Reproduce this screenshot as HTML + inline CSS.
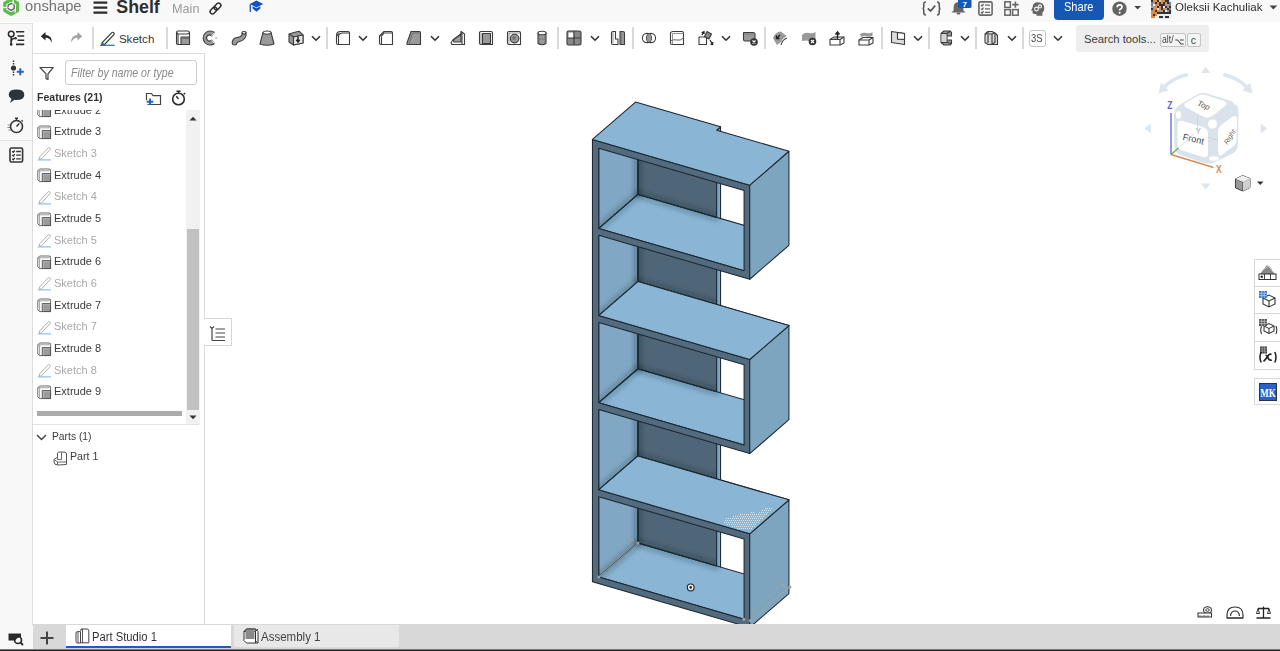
<!DOCTYPE html>
<html><head><meta charset="utf-8"><style>
*{margin:0;padding:0;box-sizing:border-box}
html,body{width:1280px;height:651px;overflow:hidden;background:#fff;font-family:"Liberation Sans",sans-serif;color:#333}
.a{position:absolute}
svg.a{overflow:visible}
#header{position:absolute;left:0;top:0;width:1280px;height:22px;background:#f8f8f8}
#toolbar{position:absolute;left:0;top:22px;width:1280px;height:31px;background:#fff}
#leftstrip{position:absolute;left:0;top:54px;width:33px;height:597px;background:#f8f8f8}
#panel{position:absolute;left:32px;top:53px;width:173px;height:572px;background:#fff;border-left:1px solid #dcdcdc;border-right:1px solid #dcdcdc;border-top:1px solid #dcdcdc}
#viewport{position:absolute;left:0;top:0;width:1280px;height:651px}
#tabbar{position:absolute;left:33px;top:624px;width:1247px;height:25px;background:#d8d8d8}
#bottomline{position:absolute;left:0;top:649px;width:1280px;height:2px;background:#242424;border-top:1px solid #7a7a7a}
.sep{position:absolute;top:27px;width:2px;height:22px;background:#d9d9d9}
.t{position:absolute;white-space:nowrap;line-height:1}
.chev{position:absolute;top:34px;width:12px;height:8px}

</style></head><body>
<div id="viewport"><svg width="1280" height="624" style="position:absolute;left:0;top:0" viewBox="0 0 1280 624"><defs><filter id="blr" x="-20%" y="-20%" width="140%" height="140%"><feGaussianBlur stdDeviation="2.6"/></filter><pattern id="dots" width="2" height="2" patternUnits="userSpaceOnUse"><rect x="0.5" y="0.5" width="1" height="1" fill="#d6e6f2"/></pattern><clipPath id="cc4"><polygon points="598.74,576.98 637.92,543.04 637.92,462.79 598.74,496.73"/><polygon points="637.92,543.04 716.69,565.98 716.69,485.73 637.92,462.79"/><polygon points="598.74,576.98 744.09,619.30 783.26,585.36 637.92,543.04"/></clipPath><clipPath id="cc3"><polygon points="598.74,489.83 637.92,455.89 637.92,375.64 598.74,409.58"/><polygon points="637.92,455.89 716.69,478.83 716.69,398.58 637.92,375.64"/><polygon points="598.74,489.83 749.75,533.80 788.93,499.86 637.92,455.89"/></clipPath><clipPath id="cc2"><polygon points="598.74,402.68 637.92,368.74 637.92,288.49 598.74,322.43"/><polygon points="637.92,368.74 716.69,391.68 716.69,311.43 637.92,288.49"/><polygon points="598.74,402.68 744.09,445.00 783.26,411.06 637.92,368.74"/></clipPath><clipPath id="cc1"><polygon points="598.74,315.53 637.92,281.59 637.92,201.34 598.74,235.28"/><polygon points="637.92,281.59 716.69,304.53 716.69,224.28 637.92,201.34"/><polygon points="598.74,315.53 749.75,359.50 788.93,325.56 637.92,281.59"/></clipPath><clipPath id="cc0"><polygon points="598.74,228.38 637.92,194.44 637.92,114.19 598.74,148.13"/><polygon points="637.92,194.44 716.69,217.38 716.69,137.13 637.92,114.19"/><polygon points="598.74,228.38 744.09,270.70 783.26,236.76 637.92,194.44"/></clipPath></defs><polygon points="637.92,549.59 716.69,572.53 716.69,130.23 637.92,107.29" fill="#4f6678" stroke="#1d2730" stroke-width="1.05" stroke-linejoin="round" /><polygon points="716.69,572.53 720.57,569.17 720.57,126.87 716.69,130.23" fill="#7ea7c4" stroke="#1d2730" stroke-width="1.05" stroke-linejoin="round" /><polygon points="598.74,583.53 637.92,549.59 637.92,107.29 598.74,141.23" fill="#80a7c4" stroke="#1d2730" stroke-width="1.05" stroke-linejoin="round" /><polygon points="598.74,576.98 744.09,619.30 783.26,585.36 637.92,543.04" fill="#8ab5d5" stroke="#1d2730" stroke-width="1.05" stroke-linejoin="round" /><g clip-path="url(#cc4)"><g filter="url(#blr)" stroke="#0f1a24" fill="none" stroke-linecap="round"><path d="M637.92,462.79 L637.92,543.04" stroke-width="7" stroke-opacity="0.28"/><path d="M598.74,576.98 L637.92,543.04" stroke-width="7" stroke-opacity="0.22"/><path d="M637.92,543.04 L716.69,565.98" stroke-width="7" stroke-opacity="0.25"/></g></g><path d="M637.92,462.79 L637.92,543.04 L716.69,565.98 M598.74,576.98 L637.92,543.04" stroke="#1d2730" stroke-width="1.05" fill="none"/><polygon points="598.74,489.83 749.75,533.80 788.93,499.86 637.92,455.89" fill="#8ab5d5" stroke="#1d2730" stroke-width="1.05" stroke-linejoin="round" /><g clip-path="url(#cc3)"><g filter="url(#blr)" stroke="#0f1a24" fill="none" stroke-linecap="round"><path d="M637.92,375.64 L637.92,455.89" stroke-width="7" stroke-opacity="0.28"/><path d="M598.74,489.83 L637.92,455.89" stroke-width="7" stroke-opacity="0.22"/><path d="M637.92,455.89 L716.69,478.83" stroke-width="7" stroke-opacity="0.25"/></g></g><path d="M637.92,375.64 L637.92,455.89 L716.69,478.83 M598.74,489.83 L637.92,455.89" stroke="#1d2730" stroke-width="1.05" fill="none"/><polygon points="598.74,402.68 744.09,445.00 783.26,411.06 637.92,368.74" fill="#8ab5d5" stroke="#1d2730" stroke-width="1.05" stroke-linejoin="round" /><g clip-path="url(#cc2)"><g filter="url(#blr)" stroke="#0f1a24" fill="none" stroke-linecap="round"><path d="M637.92,288.49 L637.92,368.74" stroke-width="7" stroke-opacity="0.28"/><path d="M598.74,402.68 L637.92,368.74" stroke-width="7" stroke-opacity="0.22"/><path d="M637.92,368.74 L716.69,391.68" stroke-width="7" stroke-opacity="0.25"/></g></g><path d="M637.92,288.49 L637.92,368.74 L716.69,391.68 M598.74,402.68 L637.92,368.74" stroke="#1d2730" stroke-width="1.05" fill="none"/><polygon points="598.74,315.53 749.75,359.50 788.93,325.56 637.92,281.59" fill="#8ab5d5" stroke="#1d2730" stroke-width="1.05" stroke-linejoin="round" /><g clip-path="url(#cc1)"><g filter="url(#blr)" stroke="#0f1a24" fill="none" stroke-linecap="round"><path d="M637.92,201.34 L637.92,281.59" stroke-width="7" stroke-opacity="0.28"/><path d="M598.74,315.53 L637.92,281.59" stroke-width="7" stroke-opacity="0.22"/><path d="M637.92,281.59 L716.69,304.53" stroke-width="7" stroke-opacity="0.25"/></g></g><path d="M637.92,201.34 L637.92,281.59 L716.69,304.53 M598.74,315.53 L637.92,281.59" stroke="#1d2730" stroke-width="1.05" fill="none"/><polygon points="598.74,228.38 744.09,270.70 783.26,236.76 637.92,194.44" fill="#8ab5d5" stroke="#1d2730" stroke-width="1.05" stroke-linejoin="round" /><g clip-path="url(#cc0)"><g filter="url(#blr)" stroke="#0f1a24" fill="none" stroke-linecap="round"><path d="M637.92,114.19 L637.92,194.44" stroke-width="7" stroke-opacity="0.28"/><path d="M598.74,228.38 L637.92,194.44" stroke-width="7" stroke-opacity="0.22"/><path d="M637.92,194.44 L716.69,217.38" stroke-width="7" stroke-opacity="0.25"/></g></g><path d="M637.92,114.19 L637.92,194.44 L716.69,217.38 M598.74,228.38 L637.92,194.44" stroke="#1d2730" stroke-width="1.05" fill="none"/><path d="M592.45,581.70 L592.45,139.40 L749.75,185.20 L749.75,279.25 L598.74,235.28 L598.74,315.53 L749.75,359.50 L749.75,453.55 L598.74,409.58 L598.74,489.83 L749.75,533.80 L749.75,627.50 Z M598.74,228.38 L744.09,270.70 L744.09,190.45 L598.74,148.13 Z M598.74,402.68 L744.09,445.00 L744.09,364.75 L598.74,322.43 Z M598.74,576.98 L744.09,619.30 L744.09,539.05 L598.74,496.73 Z " fill="#526b7e" fill-rule="evenodd" stroke="#1d2730" stroke-width="1.05" stroke-linejoin="round"/><polygon points="749.75,279.25 788.93,245.31 788.93,151.26 749.75,185.20" fill="#7ea5bf" stroke="#1d2730" stroke-width="1.05" stroke-linejoin="round" /><polygon points="749.75,453.55 788.93,419.61 788.93,325.56 749.75,359.50" fill="#7ea5bf" stroke="#1d2730" stroke-width="1.05" stroke-linejoin="round" /><polygon points="749.75,627.50 788.93,593.56 788.93,499.86 749.75,533.80" fill="#7ea5bf" stroke="#1d2730" stroke-width="1.05" stroke-linejoin="round" /><polygon points="592.45,139.40 749.75,185.20 788.93,151.26 716.69,130.23 720.57,126.87 635.50,102.10" fill="#8ab5d5" stroke="#1d2730" stroke-width="1.05" stroke-linejoin="round" /><polygon points="598.74,315.53 749.75,359.50 788.93,325.56 637.92,281.59" fill="#8ab5d5" stroke="#1d2730" stroke-width="1.05" stroke-linejoin="round" /><polygon points="598.74,489.83 749.75,533.80 788.93,499.86 637.92,455.89" fill="#8ab5d5" stroke="#1d2730" stroke-width="1.05" stroke-linejoin="round" /><path d="M765 508h1v1h-1zM767 508h1v1h-1zM769 508h1v1h-1zM771 508h1v1h-1zM762 510h1v1h-1zM764 510h1v1h-1zM766 510h1v1h-1zM768 510h1v1h-1zM770 510h1v1h-1zM751 512h1v1h-1zM753 512h1v1h-1zM759 512h1v1h-1zM761 512h1v1h-1zM763 512h1v1h-1zM765 512h1v1h-1zM767 512h1v1h-1zM740 514h1v1h-1zM742 514h1v1h-1zM744 514h1v1h-1zM746 514h1v1h-1zM748 514h1v1h-1zM750 514h1v1h-1zM752 514h1v1h-1zM754 514h1v1h-1zM756 514h1v1h-1zM758 514h1v1h-1zM760 514h1v1h-1zM762 514h1v1h-1zM764 514h1v1h-1zM766 514h1v1h-1zM733 516h1v1h-1zM735 516h1v1h-1zM737 516h1v1h-1zM739 516h1v1h-1zM741 516h1v1h-1zM743 516h1v1h-1zM745 516h1v1h-1zM747 516h1v1h-1zM749 516h1v1h-1zM751 516h1v1h-1zM753 516h1v1h-1zM755 516h1v1h-1zM757 516h1v1h-1zM759 516h1v1h-1zM761 516h1v1h-1zM763 516h1v1h-1zM726 518h1v1h-1zM728 518h1v1h-1zM730 518h1v1h-1zM732 518h1v1h-1zM734 518h1v1h-1zM736 518h1v1h-1zM738 518h1v1h-1zM740 518h1v1h-1zM742 518h1v1h-1zM744 518h1v1h-1zM746 518h1v1h-1zM748 518h1v1h-1zM750 518h1v1h-1zM752 518h1v1h-1zM754 518h1v1h-1zM756 518h1v1h-1zM758 518h1v1h-1zM760 518h1v1h-1zM762 518h1v1h-1zM725 520h1v1h-1zM727 520h1v1h-1zM729 520h1v1h-1zM731 520h1v1h-1zM733 520h1v1h-1zM735 520h1v1h-1zM737 520h1v1h-1zM739 520h1v1h-1zM741 520h1v1h-1zM743 520h1v1h-1zM745 520h1v1h-1zM747 520h1v1h-1zM749 520h1v1h-1zM751 520h1v1h-1zM753 520h1v1h-1zM755 520h1v1h-1zM757 520h1v1h-1zM759 520h1v1h-1zM724 522h1v1h-1zM726 522h1v1h-1zM728 522h1v1h-1zM730 522h1v1h-1zM732 522h1v1h-1zM734 522h1v1h-1zM736 522h1v1h-1zM738 522h1v1h-1zM740 522h1v1h-1zM742 522h1v1h-1zM744 522h1v1h-1zM746 522h1v1h-1zM748 522h1v1h-1zM750 522h1v1h-1zM752 522h1v1h-1zM754 522h1v1h-1zM756 522h1v1h-1zM758 522h1v1h-1zM727 524h1v1h-1zM729 524h1v1h-1zM731 524h1v1h-1zM733 524h1v1h-1zM735 524h1v1h-1zM737 524h1v1h-1zM739 524h1v1h-1zM741 524h1v1h-1zM743 524h1v1h-1zM745 524h1v1h-1zM747 524h1v1h-1zM749 524h1v1h-1zM751 524h1v1h-1zM753 524h1v1h-1zM755 524h1v1h-1zM732 526h1v1h-1zM734 526h1v1h-1zM736 526h1v1h-1zM738 526h1v1h-1zM740 526h1v1h-1zM742 526h1v1h-1zM744 526h1v1h-1zM746 526h1v1h-1zM748 526h1v1h-1zM750 526h1v1h-1zM752 526h1v1h-1zM754 526h1v1h-1zM737 528h1v1h-1zM739 528h1v1h-1zM741 528h1v1h-1zM743 528h1v1h-1zM745 528h1v1h-1zM747 528h1v1h-1zM749 528h1v1h-1zM751 528h1v1h-1z" fill="#dbe9f3"/><path d="M598.74,577.28 L637.92,543.34" stroke="#9b9b9b" stroke-width="1.1"/><path d="M600.74,568.48 L632.92,540.04" stroke="#9b9b9b" stroke-width="1.1" stroke-dasharray="4 5"/><circle cx="598.74" cy="576.98" r="1.6" fill="#9b9b9b"/><circle cx="637.92" cy="543.04" r="1.6" fill="#9b9b9b"/><circle cx="631.92" cy="540.04" r="1.6" fill="#9b9b9b"/><path d="M751.5,611.5 L783,584" stroke="#a2a2a2" stroke-width="1" stroke-dasharray="5 6"/><path d="M750.3,620.6 L789.9,587" stroke="#a2a2a2" stroke-width="1"/><circle cx="743.80" cy="619.30" r="1.6" fill="#a2a2a2"/><circle cx="750.30" cy="620.60" r="1.6" fill="#a2a2a2"/><circle cx="789.90" cy="587.00" r="1.6" fill="#a2a2a2"/><circle cx="783.20" cy="585.00" r="1.6" fill="#a2a2a2"/><circle cx="690.7" cy="587.4" r="3.4" fill="#e8eef3" stroke="#2b2b2b" stroke-width="1.2"/><circle cx="690.7" cy="587.4" r="1.3" fill="#2b2b2b"/></svg><svg class="a" style="left:1140px;top:60px" width="140" height="140" viewBox="1140 60 140 140">
  <g fill="#dde5ed">
    <path d="M1201 73 L1205.6 66.8 L1210.2 73 Z"/>
    <path d="M1201 183.5 L1205.6 189.7 L1210.2 183.5 Z"/>
    <path d="M1150.8 123.5 L1144.3 128.5 L1150.8 133.5 Z"/>
    <path d="M1260.6 123.5 L1267.1 128.5 L1260.6 133.5 Z"/>
  </g>
  <path d="M1187.8 74.5 Q1172 78 1163.5 88" fill="none" stroke="#dde5ed" stroke-width="3.6"/>
  <path d="M1158.5 93.5 L1161 82.5 L1168.6 90.6 Z" fill="#dde5ed"/>
  <path d="M1223.4 74.5 Q1239 78 1247.5 88" fill="none" stroke="#dde5ed" stroke-width="3.6"/>
  <path d="M1252.5 93.5 L1250 82.5 L1242.4 90.6 Z" fill="#dde5ed"/>
  <!-- cube body -->
  <path d="M1199 93.5 Q1203 92.5 1207 93.5 L1231 101 Q1238.5 104 1238.5 111 L1238 145 Q1237.5 151 1232 154 L1214 162.5 Q1208 164.5 1202 162.5 L1181 155 Q1174.5 152.5 1174.5 146 L1174 115 Q1174.5 108 1180 104.5 Z" fill="#dae3ec"/>
  <path d="M1186 107.5 Q1182 104.5 1187 102 L1198 95.8 Q1202 94 1206 95.2 L1223 100.5 Q1229 102.5 1225 106 L1213 115.5 Q1209 118.5 1204 117 Z" fill="#fff"/>
  <path d="M1177.5 125 Q1177.5 119.5 1182.5 121 L1203 127 Q1208 128.5 1208 133.5 L1208 153 Q1208 158.5 1203 157 L1182.5 150.5 Q1177.5 149 1177.5 144 Z" fill="#fff"/>
  <path d="M1218 132 Q1218 127 1222 124.5 L1232 117 Q1237 114 1237 119 L1236.5 139 Q1236.5 144 1232.5 147 L1222.5 154.5 Q1218 157.5 1218 152 Z" fill="#fff"/>
  <ellipse cx="1178.5" cy="115" rx="2.6" ry="4" fill="#fff"/>
  <circle cx="1212.5" cy="124" r="4.6" fill="#fff"/>
  <ellipse cx="1214" cy="158.5" rx="5" ry="2.2" fill="#fff"/>
  <path d="M1229 95.5 L1236 105" stroke="#fff" stroke-width="1.5"/>
  <path d="M1197.5 115 V129 M1208.5 137 L1218 140.5" stroke="#c4cfd9" stroke-width="0.7" fill="none"/>
  <text x="1197" y="108.5" font-size="7.8" font-style="italic" fill="#555" font-family="Liberation Sans" transform="rotate(22 1205 106)">Top</text>
  <text x="1183" y="142" font-size="9.2" fill="#484848" font-family="Liberation Sans" transform="rotate(13 1193 138)">Front</text>
  <text x="1219" y="142" font-size="6.9" font-style="italic" fill="#707070" font-family="Liberation Sans" transform="rotate(-58 1226 136)">Right</text>
  <text x="1195.5" y="134" font-size="8.2" fill="#aaa" font-family="Liberation Sans">Y</text>
  <!-- axes -->
  <path d="M1171 154.5 L1171 113" stroke="#5b64d6" stroke-width="1.3"/>
  <path d="M1171 154.5 L1213.5 167.5" stroke="#d98a52" stroke-width="1.4"/>
  <path d="M1171 154.5 L1178.5 148" stroke="#5fb04a" stroke-width="1.2"/>
  <path d="M1178.5 148 L1194.5 133.5" stroke="#c9cfd6" stroke-width="0.6"/>
  <text x="1167.3" y="109.5" font-size="10" font-weight="bold" fill="#5b64d6" font-family="Liberation Sans" transform="translate(1167.3 109.5) scale(0.85 1) translate(-1167.3 -109.5)">Z</text>
  <text x="1216" y="173.5" font-size="10" font-weight="bold" fill="#d98a52" font-family="Liberation Sans" transform="translate(1216 173.5) scale(0.85 1) translate(-1216 -173.5)">X</text>
  <!-- view mode cube -->
  <path d="M1235.5 179 L1242.5 175.5 L1250 178.5 L1250 187.5 L1243 191 L1235.5 188 Z" fill="#999" stroke="#333" stroke-width="0.9"/>
  <path d="M1235.5 179 L1243 182 L1250 178.5 M1243 182 V191" fill="none" stroke="#333" stroke-width="0.9"/>
  <path d="M1243 182 L1250 178.5 V187.5 L1243 191Z" fill="#cfcfcf"/>
  <path d="M1235.5 179 L1242.5 175.5 L1250 178.5 L1243 182Z" fill="#eee"/>
  <path d="M1257 181.5 H1263.5 L1260.25 185 Z" fill="#333"/>
</svg>
<!-- right side tool tabs -->
<div class="a" style="left:1254px;top:258.5px;width:26px;height:111px;background:#fff;border:1px solid #d8d8d8;border-right:none"></div>
<div class="a" style="left:1254px;top:285.5px;width:26px;height:1px;background:#d8d8d8"></div>
<div class="a" style="left:1254px;top:313px;width:26px;height:1px;background:#d8d8d8"></div>
<div class="a" style="left:1254px;top:341px;width:26px;height:1px;background:#d8d8d8"></div>
<div class="a" style="left:1254px;top:377.5px;width:26px;height:27.5px;background:#fff;border:1px solid #d8d8d8;border-right:none"></div>
<svg class="a" style="left:1258px;top:263px" width="20" height="18" viewBox="0 0 20 18"><path d="M2 11 L9 2 L17 11 Z" fill="#888"/><path d="M6 6 L11 3 L14 7" fill="none" stroke="#bbb" stroke-width="1"/><rect x="1" y="11" width="17" height="5.5" fill="#fff" stroke="#333" stroke-width="1"/><path d="M6.5 11 V16.5 M12.5 11 V16.5" stroke="#333" stroke-width="0.9"/><circle cx="3.8" cy="13.8" r="1.3" fill="#333"/></svg>
<svg class="a" style="left:1258px;top:290px" width="20" height="18" viewBox="0 0 20 18"><path d="M5 8 L11 5 L17 8 V14 L11 17 L5 14 Z" fill="#fff" stroke="#333" stroke-width="1.1"/><path d="M5 8 L11 11 L17 8 M11 11 V17" fill="none" stroke="#333" stroke-width="1.1"/><rect x="1" y="1" width="8" height="7" fill="#3b7bd4"/><path d="M1 3.3 H9 M1 5.6 H9 M3.7 1 V8 M6.3 1 V8" stroke="#bcd3f2" stroke-width="0.7"/></svg>
<svg class="a" style="left:1258px;top:318px" width="20" height="18" viewBox="0 0 20 18"><path d="M6 8 L11 5.5 L16 8 V13 L11 15.5 L6 13 Z" fill="#fff" stroke="#333" stroke-width="1.1"/><path d="M6 8 L11 10.5 L16 8 M11 10.5 V15.5" fill="none" stroke="#333" stroke-width="1"/><rect x="1" y="1" width="8" height="7" fill="#555"/><path d="M1 3.3 H9 M1 5.6 H9 M3.7 1 V8 M6.3 1 V8" stroke="#ccc" stroke-width="0.7"/><path d="M3.5 8 Q2 12 3.5 16 M18 8 Q19.5 12 18 16" fill="none" stroke="#333" stroke-width="1.1"/></svg>
<svg class="a" style="left:1258px;top:346px" width="20" height="18" viewBox="0 0 20 18"><rect x="2" y="0.5" width="7" height="7" fill="#444"/><path d="M2 2.8 H9 M2 5.1 H9 M4.3 0.5 V7.5 M6.6 0.5 V7.5" stroke="#bbb" stroke-width="0.6"/><path d="M3.2 6 Q0.8 11 3.2 16.5 M16.8 6 Q19.2 11 16.8 16.5" fill="none" stroke="#222" stroke-width="1.6"/><path d="M5.5 15.5 Q8 13 10 10 Q11.5 7.5 13.5 8.5 M7.5 9.5 Q9 9 10 11.5 Q11 15 13.8 14" fill="none" stroke="#222" stroke-width="1.7"/></svg>
<svg class="a" style="left:1259px;top:383px" width="18" height="18" viewBox="0 0 18 18"><rect x="0.5" y="0.5" width="17" height="17" fill="#2a62c9" stroke="#2b3440" stroke-width="1"/><text x="9" y="14.2" font-size="12.5" font-weight="bold" font-family="Liberation Serif" fill="#fff" text-anchor="middle" transform="translate(9 14) scale(0.72 1) translate(-9 -14)">MK</text></svg>
<!-- bottom-right measure icons -->
<svg class="a" style="left:1197px;top:606px" width="16" height="13" viewBox="0 0 16 13"><ellipse cx="10.5" cy="4" rx="4" ry="3.2" fill="#fff" stroke="#333" stroke-width="1.1"/><ellipse cx="10.5" cy="4" rx="1.8" ry="1.3" fill="none" stroke="#333" stroke-width="0.9"/><path d="M1 7 H14.5 V11 H1 Z" fill="#fff" stroke="#333" stroke-width="1.1"/><path d="M3 9 V11 M5 9.5 V11 M7 9 V11 M9 9.5 V11 M11 9 V11" stroke="#333" stroke-width="0.7"/></svg>
<svg class="a" style="left:1226px;top:606px" width="18" height="13" viewBox="0 0 18 13"><path d="M1 12 V9 Q1 1 9 1 Q17 1 17 9 V12 Z" fill="none" stroke="#333" stroke-width="1.2"/><path d="M4.5 10 Q5 5 9 5 Q13 5 13.5 10" fill="none" stroke="#333" stroke-width="1.2"/><path d="M1 12 H17" stroke="#333" stroke-width="1.2"/></svg>
<svg class="a" style="left:1256px;top:606px" width="15" height="13" viewBox="0 0 15 13"><path d="M7.5 0.5 V11.5 M2 2.5 H13 M0.5 12 H14.5" stroke="#222" stroke-width="1.3"/><path d="M2 2.5 L0.5 7.5 H3.5 Z M13 2.5 L11.5 7.5 H14.5 Z" fill="none" stroke="#222" stroke-width="0.9"/></svg>
</div>
<div id="header">
  <svg class="a" style="left:0px;top:-2px" width="24" height="20" viewBox="0 0 24 20">
    <path d="M11.2 1.6 L17.6 5.2 L17.6 12.6 L11.2 16.2 L4.8 12.6 L4.8 5.2 Z" fill="none" stroke="#5dbb4e" stroke-width="3.3" stroke-linejoin="round"/>
    <path d="M13.3 1 L13.3 5.6" stroke="#f8f8f8" stroke-width="1.3"/>
    <path d="M2.6 9.6 L7.4 9.4" stroke="#f8f8f8" stroke-width="1.3"/>
    <path d="M15.2 14.5 L15.2 10.8" stroke="#f8f8f8" stroke-width="1.3"/>
    <path d="M11.2 5.4 L14.2 7.1 L14.2 10.6 L11.2 12.3 L8.2 10.6 L8.2 7.1 Z" fill="none" stroke="#666" stroke-width="1.5"/>
    <path d="M12.7 5.6 L13.3 7.6 M8 9.6 L9.7 8.9" stroke="#f8f8f8" stroke-width="0.8"/>
  </svg>
  <div class="t" style="left:25.3px;top:-1px;font-size:14.5px;color:#747474;transform:scaleX(1.016);transform-origin:0 0">onshape</div>
  <svg class="a" style="left:93px;top:1px" width="15" height="13" viewBox="0 0 15 13"><path d="M0.5 1.6H14.3M0.5 6.6H14.3M0.5 11.6H14.3" stroke="#2b2b2b" stroke-width="2.2"/></svg>
  <div class="t" style="left:116.3px;top:-1px;font-size:17.8px;font-weight:bold;color:#2e2e2e">Shelf</div>
  <div class="t" style="left:171.5px;top:2.57px;font-size:12.2px;color:#9a9a9a;transform:scaleX(1.04);transform-origin:0 0">Main</div>
  <svg class="a" style="left:208px;top:1px" width="15" height="15" viewBox="0 0 15 15"><g transform="rotate(-45 7.5 7.5)"><rect x="0.9" y="5.2" width="7.6" height="4.6" rx="2.3" fill="none" stroke="#2d2d2d" stroke-width="1.5"/><rect x="6.5" y="5.2" width="7.6" height="4.6" rx="2.3" fill="none" stroke="#2d2d2d" stroke-width="1.5"/></g></svg>
  <svg class="a" style="left:249px;top:0px" width="15" height="13" viewBox="0 0 15 13"><path d="M7.5 0.4 L14.2 4 L7.5 7.4 L0.8 4 Z" fill="#1550c0"/><path d="M3.6 6.2 V8.6 L7.5 11.8 L11.4 8.6 V6.2 L7.5 8.3 Z" fill="#1550c0"/><path d="M1.3 4.2 V12" stroke="#1550c0" stroke-width="1.3"/></svg>
  <!-- right side -->
  <svg class="a" style="left:922px;top:1px" width="19" height="15" viewBox="0 0 19 15"><path d="M4 1 Q1.8 1 1.8 3 V5.8 Q1.8 7.3 0.6 7.5 Q1.8 7.8 1.8 9.2 V12 Q1.8 14 4 14 M15 1 Q17.2 1 17.2 3 V5.8 Q17.2 7.3 18.4 7.5 Q17.2 7.8 17.2 9.2 V12 Q17.2 14 15 14" fill="none" stroke="#555" stroke-width="1.5"/><path d="M5.8 7.3 L8.6 10 L13.2 4.6" fill="none" stroke="#555" stroke-width="1.7"/></svg>
  <svg class="a" style="left:950px;top:0px" width="22" height="15" viewBox="0 0 22 15"><path d="M8.5 2 Q3.6 2.4 3.6 7.6 V10.6 L1.4 12.6 H15.6 L13.4 10.6 V7.6 Q13.4 2.4 8.5 2 Z" fill="#666"/><rect x="6.6" y="12.4" width="3.8" height="2.2" rx="1" fill="#666"/><rect x="8" y="-1" width="13.5" height="9" rx="1.5" fill="#1658b8"/><text x="14.7" y="6.6" font-size="8" font-family="Liberation Sans" font-weight="bold" fill="#fff" text-anchor="middle">7</text></svg>
  <svg class="a" style="left:978px;top:1px" width="15" height="15" viewBox="0 0 15 15"><rect x="0.9" y="0.9" width="13.2" height="13.2" rx="1.5" fill="none" stroke="#666" stroke-width="1.6"/><path d="M3 4 L4 5 L5.6 3 M3 7.6 L4 8.6 L5.6 6.6 M3 11.2 L4 12.2 L5.6 10.2 M7 4.2H12 M7 7.8H12 M7 11.4H12" fill="none" stroke="#666" stroke-width="1.3"/></svg>
  <svg class="a" style="left:1004px;top:1px" width="16" height="15" viewBox="0 0 16 15"><rect x="0.8" y="0.8" width="5.6" height="5.6" fill="none" stroke="#666" stroke-width="1.5"/><rect x="0.8" y="8.6" width="5.6" height="5.6" fill="none" stroke="#666" stroke-width="1.5"/><rect x="8.6" y="8.6" width="5.6" height="5.6" fill="none" stroke="#666" stroke-width="1.5"/><path d="M11.4 0.4 V6.8 M8.2 3.6 H14.6" stroke="#666" stroke-width="1.6"/></svg>
  <svg class="a" style="left:1030px;top:2px" width="15" height="14" viewBox="0 0 15 14"><path d="M7.8 0.3 Q14.3 0.3 14.3 6.4 Q14.3 9 12.4 10.4 V13.8 H6.4 V12 H4 Q2.6 12 2.6 10.6 V8.8 L1 8.4 L2.6 5.4 Q2.8 0.3 7.8 0.3 Z" fill="#666"/><circle cx="6.5" cy="7" r="1.9" fill="none" stroke="#f8f8f8" stroke-width="1.1"/><circle cx="10" cy="4.4" r="1.5" fill="none" stroke="#f8f8f8" stroke-width="1.1"/></svg>
  <div class="a" style="left:1054px;top:-3px;width:50px;height:22.5px;background:#1557b2;border-radius:4px"></div>
  <div class="t" style="left:1063.9px;top:1px;font-size:12.2px;color:#fff;transform:scaleX(0.906);transform-origin:0 0">Share</div>
  <svg class="a" style="left:1111px;top:2px" width="32" height="14" viewBox="0 0 32 14"><circle cx="8.5" cy="6.7" r="7.2" fill="#646464"/><path d="M6.2 5.2 Q6.2 2.8 8.6 2.8 Q11 2.8 11 5 Q11 6.4 9.2 7.2 Q8.6 7.6 8.6 8.6" fill="none" stroke="#fff" stroke-width="1.7"/><circle cx="8.6" cy="10.8" r="1.05" fill="#fff"/><path d="M23.3 4 H30 L26.65 7.6 Z" fill="#444"/></svg>
  <svg class="a" style="left:1151px;top:0px" width="20" height="19" viewBox="0 0 20 19"><g style="filter:blur(0.35px)"><rect x="0" y="0" width="2.05" height="2.1" fill="#2b3542"/><rect x="2" y="0" width="2.05" height="2.1" fill="#df8a48"/><rect x="4" y="0" width="2.05" height="2.1" fill="#df8a48"/><rect x="6" y="0" width="2.05" height="2.1" fill="#2b3542"/><rect x="8" y="0" width="2.05" height="2.1" fill="#f1c59a"/><rect x="10" y="0" width="2.05" height="2.1" fill="#df8a48"/><rect x="12" y="0" width="2.05" height="2.1" fill="#df8a48"/><rect x="14" y="0" width="2.05" height="2.1" fill="#2b3542"/><rect x="16" y="0" width="2.05" height="2.1" fill="#2b3542"/><rect x="18" y="0" width="2.05" height="2.1" fill="#ececec"/><rect x="0" y="2" width="2.05" height="2.1" fill="#5d8ab0"/><rect x="2" y="2" width="2.05" height="2.1" fill="#df8a48"/><rect x="4" y="2" width="2.05" height="2.1" fill="#2b3542"/><rect x="6" y="2" width="2.05" height="2.1" fill="#df8a48"/><rect x="8" y="2" width="2.05" height="2.1" fill="#2b3542"/><rect x="10" y="2" width="2.05" height="2.1" fill="#df8a48"/><rect x="12" y="2" width="2.05" height="2.1" fill="#2b3542"/><rect x="14" y="2" width="2.05" height="2.1" fill="#df8a48"/><rect x="16" y="2" width="2.05" height="2.1" fill="#2b3542"/><rect x="18" y="2" width="2.05" height="2.1" fill="#5d8ab0"/><rect x="0" y="4" width="2.05" height="2.1" fill="#5d8ab0"/><rect x="2" y="4" width="2.05" height="2.1" fill="#ececec"/><rect x="4" y="4" width="2.05" height="2.1" fill="#df8a48"/><rect x="6" y="4" width="2.05" height="2.1" fill="#df8a48"/><rect x="8" y="4" width="2.05" height="2.1" fill="#2b3542"/><rect x="10" y="4" width="2.05" height="2.1" fill="#2b3542"/><rect x="12" y="4" width="2.05" height="2.1" fill="#2b3542"/><rect x="14" y="4" width="2.05" height="2.1" fill="#9ba5ae"/><rect x="16" y="4" width="2.05" height="2.1" fill="#df8a48"/><rect x="18" y="4" width="2.05" height="2.1" fill="#5d8ab0"/><rect x="0" y="6" width="2.05" height="2.1" fill="#9ba5ae"/><rect x="2" y="6" width="2.05" height="2.1" fill="#df8a48"/><rect x="4" y="6" width="2.05" height="2.1" fill="#df8a48"/><rect x="6" y="6" width="2.05" height="2.1" fill="#2b3542"/><rect x="8" y="6" width="2.05" height="2.1" fill="#df8a48"/><rect x="10" y="6" width="2.05" height="2.1" fill="#2b3542"/><rect x="12" y="6" width="2.05" height="2.1" fill="#ececec"/><rect x="14" y="6" width="2.05" height="2.1" fill="#2b3542"/><rect x="16" y="6" width="2.05" height="2.1" fill="#df8a48"/><rect x="18" y="6" width="2.05" height="2.1" fill="#2b3542"/><rect x="0" y="8" width="2.05" height="2.1" fill="#2b3542"/><rect x="2" y="8" width="2.05" height="2.1" fill="#df8a48"/><rect x="4" y="8" width="2.05" height="2.1" fill="#df8a48"/><rect x="6" y="8" width="2.05" height="2.1" fill="#ececec"/><rect x="8" y="8" width="2.05" height="2.1" fill="#df8a48"/><rect x="10" y="8" width="2.05" height="2.1" fill="#2b3542"/><rect x="12" y="8" width="2.05" height="2.1" fill="#df8a48"/><rect x="14" y="8" width="2.05" height="2.1" fill="#9ba5ae"/><rect x="16" y="8" width="2.05" height="2.1" fill="#2b3542"/><rect x="18" y="8" width="2.05" height="2.1" fill="#5d8ab0"/><rect x="0" y="10" width="2.05" height="2.1" fill="#df8a48"/><rect x="2" y="10" width="2.05" height="2.1" fill="#df8a48"/><rect x="4" y="10" width="2.05" height="2.1" fill="#2b3542"/><rect x="6" y="10" width="2.05" height="2.1" fill="#df8a48"/><rect x="8" y="10" width="2.05" height="2.1" fill="#9ba5ae"/><rect x="10" y="10" width="2.05" height="2.1" fill="#df8a48"/><rect x="12" y="10" width="2.05" height="2.1" fill="#2b3542"/><rect x="14" y="10" width="2.05" height="2.1" fill="#ececec"/><rect x="16" y="10" width="2.05" height="2.1" fill="#df8a48"/><rect x="18" y="10" width="2.05" height="2.1" fill="#2b3542"/><rect x="0" y="12" width="2.05" height="2.1" fill="#df8a48"/><rect x="2" y="12" width="2.05" height="2.1" fill="#df8a48"/><rect x="4" y="12" width="2.05" height="2.1" fill="#df8a48"/><rect x="6" y="12" width="2.05" height="2.1" fill="#2b3542"/><rect x="8" y="12" width="2.05" height="2.1" fill="#2b3542"/><rect x="10" y="12" width="2.05" height="2.1" fill="#2b3542"/><rect x="12" y="12" width="2.05" height="2.1" fill="#2b3542"/><rect x="14" y="12" width="2.05" height="2.1" fill="#2b3542"/><rect x="16" y="12" width="2.05" height="2.1" fill="#2b3542"/><rect x="18" y="12" width="2.05" height="2.1" fill="#2b3542"/><rect x="0" y="14" width="2.05" height="2.1" fill="#df8a48"/><rect x="2" y="14" width="2.05" height="2.1" fill="#2b3542"/><rect x="4" y="14" width="2.05" height="2.1" fill="#df8a48"/><rect x="6" y="14" width="2.05" height="2.1" fill="#ececec"/><rect x="8" y="14" width="2.05" height="2.1" fill="#ececec"/><rect x="10" y="14" width="2.05" height="2.1" fill="#ececec"/><rect x="12" y="14" width="2.05" height="2.1" fill="#ececec"/><rect x="14" y="14" width="2.05" height="2.1" fill="#ececec"/><rect x="16" y="14" width="2.05" height="2.1" fill="#ececec"/><rect x="18" y="14" width="2.05" height="2.1" fill="#ececec"/><rect x="0" y="16" width="2.05" height="2.1" fill="#df8a48"/><rect x="2" y="16" width="2.05" height="2.1" fill="#df8a48"/><rect x="4" y="16" width="2.05" height="2.1" fill="#ececec"/><rect x="6" y="16" width="2.05" height="2.1" fill="#ececec"/><rect x="8" y="16" width="2.05" height="2.1" fill="#2b3542"/><rect x="10" y="16" width="2.05" height="2.1" fill="#2b3542"/><rect x="12" y="16" width="2.05" height="2.1" fill="#ececec"/><rect x="14" y="16" width="2.05" height="2.1" fill="#2b3542"/><rect x="16" y="16" width="2.05" height="2.1" fill="#2b3542"/><rect x="18" y="16" width="2.05" height="2.1" fill="#ececec"/></g></svg>
  <div class="t" style="left:1174.7px;top:2px;font-size:11.8px;color:#2f2f2f;transform:scaleX(0.974);transform-origin:0 0">Oleksii Kachuliak</div>
  <svg class="a" style="left:1269px;top:5px" width="9" height="5" viewBox="0 0 9 5"><path d="M0.5 0.5 H8.3 L4.4 4.6 Z" fill="#444"/></svg>
</div>
<div id="toolbar"><div class="a" style="left:0;top:1px;width:33px;height:32px;border-right:1px solid #dcdcdc;border-top:1px solid #e3e3e3;background:#f8f8f8"></div><svg class="a" style="left:7px;top:8px" width="18" height="16" viewBox="0 0 18 16"><circle cx="4.2" cy="4" r="2.8" fill="none" stroke="#2b2b2b" stroke-width="1.5"/><path d="M4.2 6.8 V14.5" stroke="#2b2b2b" stroke-width="1.5"/><path d="M4.2 12 Q4.2 8.5 8 8.2" fill="none" stroke="#2b2b2b" stroke-width="1.4"/><circle cx="8.6" cy="8.2" r="1.2" fill="#2b2b2b"/><circle cx="4.2" cy="14.4" r="1.3" fill="#2b2b2b"/><path d="M9 1.8 H17.2 M10.5 6 H17.2 M10.5 10.2 H17.2 M9 14.4 H17.2" stroke="#2b2b2b" stroke-width="1.6"/></svg><svg class="a" style="left:40px;top:9px" width="13" height="13" viewBox="0 0 13 13"><path d="M5.5 1 L0.8 5.3 L5.5 9.6 V6.8 Q10 6.6 11.6 11.8 Q12.6 5 5.5 3.8 Z" fill="#2a2a2a"/></svg><svg class="a" style="left:70px;top:9px" width="13" height="13" viewBox="0 0 13 13"><path d="M7.5 1 L12.2 5.3 L7.5 9.6 V6.8 Q3 6.6 1.4 11.8 Q0.4 5 7.5 3.8 Z" fill="#a3a3a3"/></svg><div class="a" style="left:91.5px;top:5px;width:2px;height:22px;background:#d9d9d9"></div><div class="a" style="left:165.5px;top:5px;width:2px;height:22px;background:#d9d9d9"></div><div class="a" style="left:325.5px;top:5px;width:2px;height:22px;background:#d9d9d9"></div><div class="a" style="left:556.5px;top:5px;width:2px;height:22px;background:#d9d9d9"></div><div class="a" style="left:631.5px;top:5px;width:2px;height:22px;background:#d9d9d9"></div><div class="a" style="left:764px;top:5px;width:2px;height:22px;background:#d9d9d9"></div><div class="a" style="left:881px;top:5px;width:2px;height:22px;background:#d9d9d9"></div><div class="a" style="left:928px;top:5px;width:2px;height:22px;background:#d9d9d9"></div><div class="a" style="left:974.5px;top:5px;width:2px;height:22px;background:#d9d9d9"></div><div class="a" style="left:1021.5px;top:5px;width:2px;height:22px;background:#d9d9d9"></div><svg class="a" style="left:99px;top:9px" width="17" height="15" viewBox="0 0 17 15"><path d="M3.2 11.6 L12.8 1.6 Q13.6 0.9 14.4 1.6 L15 2.2 Q15.6 3 14.9 3.7 L5.3 13.7 L2.6 14.2 Z" fill="none" stroke="#333" stroke-width="1.2"/><path d="M3.4 11.8 L5.2 13.5" stroke="#333" stroke-width="1"/><path d="M1 14.3 H15.6" stroke="#2a76d2" stroke-width="1.3"/></svg><div class="t" style="left:118.9px;top:10.68px;font-size:11.6px;color:#333">Sketch</div><svg class="a" style="left:174.5px;top:8px" width="16" height="16" viewBox="0 0 16 16"><path d="M1.5 2.5 Q1.5 1 3 1 H12.5 Q14.5 1 14.5 3 V14.5 H3 Q1.5 14.5 1.5 13 Z" fill="#fdfdfd" stroke="#3c3c3c" stroke-width="1.1" stroke-linejoin="round"/><path d="M1.5 2.5 L3 4 H12.5 L14.5 3" fill="none" stroke="#3c3c3c" stroke-width="1.1" stroke-linejoin="round"/><path d="M3 4 V14.5" fill="none" stroke="#3c3c3c" stroke-width="1.1" stroke-linejoin="round"/><rect x="6" y="7" width="8.5" height="7.5" fill="#9a9a9a" stroke="#3c3c3c" stroke-width="1.1" stroke-linejoin="round"/><path d="M6 7 L7.5 8.5 H14.5" fill="none" stroke="#666" stroke-width="0.8"/></svg><svg class="a" style="left:202.5px;top:8px" width="16" height="16" viewBox="0 0 16 16"><path d="M11.5 2.5 A7 7 0 1 0 11.5 13.5 L8.6 10.2 A3 3 0 1 1 8.6 5.8 Z" fill="#9a9a9a" stroke="#3c3c3c" stroke-width="1.1" stroke-linejoin="round"/><path d="M11.5 2.5 L8.6 5.8 M11.5 13.5 L8.6 10.2" stroke="#fdfdfd" stroke-width="1" fill="none"/><path d="M12.2 8 H14.2" stroke="#777" stroke-width="0.8"/></svg><svg class="a" style="left:231px;top:8px" width="16" height="16" viewBox="0 0 16 16"><path d="M3.5 15 Q1 15 1.2 12 Q2 8 6 7.5 Q10 7 11 5 L11 3 Q12.5 1.2 15 2.3 L15 5.5 Q14 10 8.5 11.5 Q5.5 12.2 5.5 14 Q5 15 3.5 15 Z" fill="#9a9a9a" stroke="#3c3c3c" stroke-width="1.1" stroke-linejoin="round"/><ellipse cx="13" cy="2.8" rx="2" ry="1.3" fill="#fdfdfd" stroke="#3c3c3c" stroke-width="1.1" stroke-linejoin="round"/></svg><svg class="a" style="left:258.5px;top:8px" width="16" height="16" viewBox="0 0 16 16"><path d="M4 2.5 L1 14 Q8 16.5 15 14 L12 2.5 Z" fill="#9a9a9a" stroke="#3c3c3c" stroke-width="1.1" stroke-linejoin="round"/><ellipse cx="8" cy="2.6" rx="4" ry="1.6" fill="#fdfdfd" stroke="#3c3c3c" stroke-width="1.1" stroke-linejoin="round"/></svg><svg class="a" style="left:287.5px;top:8px" width="16" height="16" viewBox="0 0 16 16"><path d="M1 4 Q6 2.5 11 1.2 L15 5 V13 L5.5 15 L1 12 Z" fill="#9a9a9a" stroke="#3c3c3c" stroke-width="1.1" stroke-linejoin="round"/><path d="M1 4 L5.5 7 L15 5 M5.5 7 V15" fill="none" stroke="#3c3c3c" stroke-width="1.1" stroke-linejoin="round"/><path d="M5.5 7 L15 5 V13 L5.5 15Z" fill="#e6e6e6" stroke="#3c3c3c" stroke-width="1.1" stroke-linejoin="round"/><path d="M10 6.5 V11.5 M8.3 9.8 L10 12 L11.7 9.8" fill="none" stroke="#222" stroke-width="1.5"/></svg><svg class="a" style="left:310.5px;top:13px" width="10" height="7" viewBox="0 0 10 7"><path d="M1 1.2 L5 5.2 L9 1.2" fill="none" stroke="#333" stroke-width="1.6"/></svg><svg class="a" style="left:334.5px;top:8px" width="16" height="16" viewBox="0 0 16 16"><path d="M1.5 5.5 Q1.5 1.5 5.5 1.5 H13 Q14.5 1.5 14.5 3 V14.5 H3 Q1.5 14.5 1.5 13 Z" fill="#fdfdfd" stroke="#3c3c3c" stroke-width="1.1" stroke-linejoin="round"/><path d="M1.5 5.5 Q2 3 5 2.5 Q3.5 4.5 3.5 7 Z" fill="#555"/><path d="M3.5 7 V14.5 M3.5 7 Q3.5 3.5 7 3 H14.5" fill="none" stroke="#3c3c3c" stroke-width="1.1" stroke-linejoin="round"/></svg><svg class="a" style="left:357.5px;top:13px" width="10" height="7" viewBox="0 0 10 7"><path d="M1 1.2 L5 5.2 L9 1.2" fill="none" stroke="#333" stroke-width="1.6"/></svg><svg class="a" style="left:378px;top:8px" width="16" height="16" viewBox="0 0 16 16"><path d="M1.5 6 L6 1.5 H13 Q14.5 1.5 14.5 3 V14.5 H3 Q1.5 14.5 1.5 13 Z" fill="#fdfdfd" stroke="#3c3c3c" stroke-width="1.1" stroke-linejoin="round"/><path d="M1.5 6 L6 1.5 L7 3 L3.5 7 Z" fill="#555"/><path d="M3.5 7 V14.5 M7 3 H14.5" fill="none" stroke="#3c3c3c" stroke-width="1.1" stroke-linejoin="round"/></svg><svg class="a" style="left:406px;top:8px" width="16" height="16" viewBox="0 0 16 16"><path d="M5 1.5 H13.5 Q14.5 1.5 14.5 3 V14.5 H2 Q0.5 14.5 1 13 Z" fill="#9a9a9a" stroke="#3c3c3c" stroke-width="1.1" stroke-linejoin="round"/><path d="M6.5 3 H14.5 M6.5 3 L3 14.5" fill="none" stroke="#666" stroke-width="0.9"/></svg><svg class="a" style="left:429.5px;top:13px" width="10" height="7" viewBox="0 0 10 7"><path d="M1 1.2 L5 5.2 L9 1.2" fill="none" stroke="#333" stroke-width="1.6"/></svg><svg class="a" style="left:449.5px;top:8px" width="16" height="16" viewBox="0 0 16 16"><path d="M11 1.5 L14.5 4 V14.5 H3 Q1 14.5 1 12.5 L3 10 L11 4 Z" fill="#fdfdfd" stroke="#3c3c3c" stroke-width="1.1" stroke-linejoin="round"/><path d="M3 10 L11 4 V12 H4Z" fill="#9a9a9a" stroke="#3c3c3c" stroke-width="1.1" stroke-linejoin="round"/><path d="M11 1.5 L12 4 V14.5" fill="none" stroke="#3c3c3c" stroke-width="1.1" stroke-linejoin="round"/></svg><svg class="a" style="left:477.5px;top:8px" width="16" height="16" viewBox="0 0 16 16"><path d="M1.5 2.5 Q1.5 1.5 3 1.5 H13 Q14.5 1.5 14.5 3 V14.5 H3 Q1.5 14.5 1.5 13 Z" fill="#fdfdfd" stroke="#3c3c3c" stroke-width="1.1" stroke-linejoin="round"/><rect x="4.5" y="3.5" width="8" height="10" fill="#9a9a9a" stroke="#3c3c3c" stroke-width="1.1" stroke-linejoin="round"/><path d="M3 3 V14" fill="none" stroke="#777" stroke-width="0.8"/></svg><svg class="a" style="left:505.5px;top:8px" width="16" height="16" viewBox="0 0 16 16"><path d="M1.5 2.5 Q1.5 1.5 3 1.5 H13 Q14.5 1.5 14.5 3 V14.5 H3 Q1.5 14.5 1.5 13 Z" fill="#fdfdfd" stroke="#3c3c3c" stroke-width="1.1" stroke-linejoin="round"/><circle cx="8.6" cy="8.6" r="4.3" fill="#9a9a9a" stroke="#3c3c3c" stroke-width="1.1" stroke-linejoin="round"/><circle cx="8" cy="8" r="2" fill="#777"/><path d="M3 3 V14 M3 3 H14" fill="none" stroke="#777" stroke-width="0.8"/></svg><svg class="a" style="left:534px;top:8px" width="16" height="16" viewBox="0 0 16 16"><path d="M4 3 V13.5 Q8 16 12 13.5 V3 Z" fill="#9a9a9a" stroke="#3c3c3c" stroke-width="1.1" stroke-linejoin="round"/><ellipse cx="8" cy="3" rx="4" ry="1.8" fill="#fdfdfd" stroke="#3c3c3c" stroke-width="1.1" stroke-linejoin="round"/><path d="M5 5 V13 M11 5 V13 M5 9 H11" stroke="#666" stroke-width="0.6"/></svg><svg class="a" style="left:566px;top:8px" width="16" height="16" viewBox="0 0 16 16"><rect x="1" y="1" width="14" height="14" rx="1.5" fill="#888" stroke="#3c3c3c" stroke-width="1.1" stroke-linejoin="round"/><rect x="2.5" y="2.5" width="5" height="5.5" fill="#fdfdfd"/><path d="M8 1 V15 M1 8 H15" stroke="#3c3c3c" stroke-width="1.1"/></svg><svg class="a" style="left:589.5px;top:13px" width="10" height="7" viewBox="0 0 10 7"><path d="M1 1.2 L5 5.2 L9 1.2" fill="none" stroke="#333" stroke-width="1.6"/></svg><svg class="a" style="left:609.5px;top:8px" width="16" height="16" viewBox="0 0 16 16"><path d="M1.5 3 Q1.5 1.5 3 1.5 H5.5 V9 L8 9 V14.5 H3 Q1.5 14.5 1.5 13 Z" fill="#fdfdfd" stroke="#3c3c3c" stroke-width="1.1" stroke-linejoin="round"/><path d="M10 1.5 H13 Q14.5 1.5 14.5 3 V14.5 H10 Z" fill="#9a9a9a" stroke="#3c3c3c" stroke-width="1.1" stroke-linejoin="round"/><path d="M3 2 V13 M11.5 2 V14" stroke="#777" stroke-width="0.8"/></svg><svg class="a" style="left:641px;top:8px" width="16" height="16" viewBox="0 0 16 16"><circle cx="6" cy="8" r="4.6" fill="none" stroke="#3c3c3c" stroke-width="1.1" stroke-linejoin="round"/><circle cx="10" cy="8" r="4.6" fill="none" stroke="#3c3c3c" stroke-width="1.1" stroke-linejoin="round"/><path d="M8 3.9 A4.6 4.6 0 0 1 8 12.1 A4.6 4.6 0 0 1 8 3.9Z" fill="#999"/></svg><svg class="a" style="left:669px;top:8px" width="16" height="16" viewBox="0 0 16 16"><path d="M1.5 3 Q2 1.5 4 1.5 H13 Q14.5 1.5 14.5 3 V14.5 H3 Q1.5 14.5 1.5 13 Z" fill="#fdfdfd" stroke="#3c3c3c" stroke-width="1.1" stroke-linejoin="round"/><path d="M1.5 11 Q5 9 8 10 Q11 11 14.5 8" fill="none" stroke="#666" stroke-width="1"/><path d="M3.5 3.5 V14.5 M3.5 3.5 H14.5" fill="none" stroke="#777" stroke-width="0.8"/></svg><svg class="a" style="left:698px;top:8px" width="16" height="16" viewBox="0 0 16 16"><rect x="1" y="7" width="7.5" height="7.5" fill="#fdfdfd" stroke="#3c3c3c" stroke-width="1.1" stroke-linejoin="round"/><path d="M9 1.5 L13.5 4 L11 9 L6.5 6.5Z" fill="#888" stroke="#3c3c3c" stroke-width="1.1" stroke-linejoin="round"/><path d="M4 5 L6 1.6 M3.6 2.8 L6 1.6 L6.2 4 M12 10 L14.6 14.5 M12.4 14.2 L14.6 14.5 L14.8 12" fill="none" stroke="#222" stroke-width="1.2"/></svg><svg class="a" style="left:721px;top:13px" width="10" height="7" viewBox="0 0 10 7"><path d="M1 1.2 L5 5.2 L9 1.2" fill="none" stroke="#333" stroke-width="1.6"/></svg><svg class="a" style="left:742px;top:8px" width="16" height="16" viewBox="0 0 16 16"><path d="M1.5 2.5 H11 Q13 2.5 13 4 V11 H3 Q1.5 11 1.5 9.5Z" fill="#999" stroke="#3c3c3c" stroke-width="1.1" stroke-linejoin="round"/><path d="M1.5 2.5 L3 4 H13" fill="none" stroke="#777" stroke-width="0.8"/><circle cx="12" cy="12" r="3.8" fill="#333"/><path d="M10.5 10.5 L13.5 13.5 M13.5 10.5 L10.5 13.5" stroke="#fff" stroke-width="1.2"/></svg><svg class="a" style="left:772px;top:8px" width="16" height="16" viewBox="0 0 16 16"><path d="M1 8 Q3 2 9 1.5 L14.5 6 Q11 8 9 12 L5 15 Z" fill="#999"/><path d="M8 5 L4.5 8.5 M4.5 5.5 V8.5 H7.5" fill="none" stroke="#222" stroke-width="1.4"/><path d="M9 15 Q10 10 15 8" fill="none" stroke="#3c3c3c" stroke-width="1.1" stroke-linejoin="round"/></svg><svg class="a" style="left:801px;top:8px" width="16" height="16" viewBox="0 0 16 16"><path d="M1 5 Q4 2 8 3 Q11 4 14.5 2 V9 L9 11 Q5 10 1 11 Z" fill="#999"/><circle cx="11.5" cy="11.5" r="3.8" fill="#333"/><path d="M10 10 L13 13 M13 10 L10 13" stroke="#fff" stroke-width="1.2"/></svg><svg class="a" style="left:829px;top:8px" width="16" height="16" viewBox="0 0 16 16"><path d="M1 9.5 L5 7 H15 V13 L11 15 H1Z" fill="#fdfdfd" stroke="#3c3c3c" stroke-width="1.1" stroke-linejoin="round"/><path d="M1 9.5 H11 L15 7 M11 9.5 V15" fill="none" stroke="#3c3c3c" stroke-width="1.1" stroke-linejoin="round"/><path d="M4 9.5 Q5 7 6 7 H12" fill="#888"/><path d="M8.5 9 V2.5 M6.5 4.5 L8.5 2 L10.5 4.5" fill="none" stroke="#222" stroke-width="1.5"/></svg><svg class="a" style="left:858px;top:8px" width="16" height="16" viewBox="0 0 16 16"><path d="M1 10 L5 7.5 H15 V13 L11 15 H1Z" fill="#fdfdfd" stroke="#3c3c3c" stroke-width="1.1" stroke-linejoin="round"/><path d="M1 10 H11 L15 7.5 M11 10 V15" fill="none" stroke="#3c3c3c" stroke-width="1.1" stroke-linejoin="round"/><path d="M2 4 Q6 2 9 3 Q12 4 14.5 2 V6 Q12 7 9 6.5 Q6 5.5 3 7 Z" fill="#999"/></svg><svg class="a" style="left:890px;top:8px" width="16" height="16" viewBox="0 0 16 16"><path d="M1.5 1.5 L14.5 3.5 V14.5 L1.5 12.5 Z" fill="#ddd" stroke="#3c3c3c" stroke-width="1.1" stroke-linejoin="round"/><path d="M7.5 2.5 V9 L14.5 9.5" fill="none" stroke="#3c3c3c" stroke-width="1.1" stroke-linejoin="round"/><path d="M7.5 2.5 L14.5 3.5 V9.5 L7.5 9Z" fill="#fdfdfd" stroke="#3c3c3c" stroke-width="1.1" stroke-linejoin="round"/></svg><svg class="a" style="left:913px;top:13px" width="10" height="7" viewBox="0 0 10 7"><path d="M1 1.2 L5 5.2 L9 1.2" fill="none" stroke="#333" stroke-width="1.6"/></svg><svg class="a" style="left:937px;top:8px" width="16" height="16" viewBox="0 0 16 16"><path d="M4 3.5 L7 1 H13 L14.5 2.5 V6 H10 V10 H14.5 V13.5 L13 15 H7 L4 12.5 Z" fill="#9a9a9a" stroke="#3c3c3c" stroke-width="1.1" stroke-linejoin="round"/><path d="M4 3.5 H10 L13 1 M10 3.5 V6 M10 10 V12.5 H4 M10 12.5 L14.5 13.5 M7 1 V1" fill="none" stroke="#3c3c3c" stroke-width="1.1" stroke-linejoin="round"/><path d="M4.5 4 H9.5 V12 H4.5Z" fill="#d5d5d5"/></svg><svg class="a" style="left:960px;top:13px" width="10" height="7" viewBox="0 0 10 7"><path d="M1 1.2 L5 5.2 L9 1.2" fill="none" stroke="#333" stroke-width="1.6"/></svg><svg class="a" style="left:982.5px;top:8px" width="16" height="16" viewBox="0 0 16 16"><path d="M2 4 L5 1.5 H9 L12 3 L14.5 5.5 V14.5 H5 L2 12.5Z" fill="#d9d9d9" stroke="#3c3c3c" stroke-width="1.1" stroke-linejoin="round"/><path d="M2 4 H9 V14.5 M9 4 L12 3" fill="none" stroke="#3c3c3c" stroke-width="1.1" stroke-linejoin="round"/><path d="M5 5 V13 M12 3 V12 L9 14.5" fill="none" stroke="#3c3c3c" stroke-width="1.1" stroke-linejoin="round"/><path d="M5 1.5 V4" fill="none" stroke="#3c3c3c" stroke-width="1.1" stroke-linejoin="round"/></svg><svg class="a" style="left:1007px;top:13px" width="10" height="7" viewBox="0 0 10 7"><path d="M1 1.2 L5 5.2 L9 1.2" fill="none" stroke="#333" stroke-width="1.6"/></svg><div class="a" style="left:1029px;top:7.5px;width:17px;height:17px;border:1px solid #c4c4c4;border-radius:3px;background:#fff"></div><div class="t" style="left:1031.3px;top:11px;font-size:10.5px;color:#444;transform:scaleX(0.9);transform-origin:0 0">3S</div><svg class="a" style="left:1053px;top:13px" width="10" height="7" viewBox="0 0 10 7"><path d="M1 1.2 L5 5.2 L9 1.2" fill="none" stroke="#333" stroke-width="1.6"/></svg><div class="a" style="left:1076px;top:2.5px;width:133px;height:27.5px;background:#eeeeee;border-radius:3px"></div><div class="t" style="left:1083.9px;top:12px;font-size:11.25px;color:#3b3b3b">Search tools...</div><div class="a" style="left:1160px;top:10.5px;width:26px;height:14px;background:#f4f4f4;border:1px solid #c4c4c4;border-radius:2px"></div><div class="t" style="left:1161.5px;top:12.5px;font-size:10.2px;color:#444;transform:scaleX(0.85);transform-origin:0 0">alt/</div><svg class="a" style="left:1174.6px;top:17px" width="9" height="6" viewBox="0 0 9 6"><path d="M0.3 1 H2.6 L6 5 H8.7 M5 1 H8.7" fill="none" stroke="#444" stroke-width="1.05"/></svg><div class="a" style="left:1187px;top:10.5px;width:13.5px;height:14px;background:#f4f4f4;border:1px solid #c4c4c4;border-radius:2px"></div><div class="t" style="left:1190.8px;top:12.5px;font-size:10.5px;color:#444">c</div></div><div id="leftstrip">
  <svg class="a" style="left:9px;top:6px" width="16" height="16" viewBox="0 0 16 16"><circle cx="4.5" cy="8" r="2.6" fill="#333"/><path d="M4.5 0.5 V2 M4.5 3 V4.4 M4.5 11.6 V13 M4.5 14 V15.5" stroke="#333" stroke-width="1.5"/><path d="M11.3 8.3 V15.3 M7.8 11.8 H14.8" stroke="#1e64c8" stroke-width="2"/></svg>
  <svg class="a" style="left:8px;top:35px" width="17" height="15" viewBox="0 0 17 15"><path d="M8.5 0.6 Q16.3 0.6 16.3 5.8 Q16.3 11 8.5 11 Q7.5 11 6.6 10.8 L1.8 14 L3.6 10 Q0.7 8.6 0.7 5.8 Q0.7 0.6 8.5 0.6 Z" fill="#2e3338"/></svg>
  <svg class="a" style="left:7px;top:63px" width="17" height="17" viewBox="0 0 17 17"><circle cx="9.5" cy="9.5" r="6" fill="none" stroke="#333" stroke-width="1.6"/><path d="M8 1.2 H11 M9.5 1.5 V3.4 M14.6 3.3 L15.8 4.5" stroke="#333" stroke-width="1.4"/><path d="M9.5 9.6 L12.2 6.6" stroke="#333" stroke-width="1.5"/><path d="M0.6 8 H3.2 M0.4 10.5 H3 M1.4 13 H4" stroke="#888" stroke-width="1"/></svg>
  <div class="a" style="left:0;top:85.5px;width:33px;height:1px;background:#e2e2e2"></div>
  <svg class="a" style="left:9px;top:93px" width="15" height="16" viewBox="0 0 15 16"><rect x="1" y="1" width="12.6" height="14" rx="1.5" fill="none" stroke="#333" stroke-width="1.6"/><path d="M3.2 4.3 L4.3 5.3 L5.8 3.5 M3.2 8 L4.3 9 L5.8 7.2 M3.2 11.7 L4.3 12.7 L5.8 10.9 M7.2 4.5H11.8 M7.2 8.2H11.8 M7.2 11.9H11.8" fill="none" stroke="#333" stroke-width="1.3"/></svg>
  <svg class="a" style="left:8px;top:578px" width="16" height="14" viewBox="0 0 16 14"><path d="M0.5 1.5 H13 V5 Q9 5 7.5 8.5 H0.5 Z" fill="#2a2a2a"/><circle cx="10" cy="8" r="3.5" fill="none" stroke="#2a2a2a" stroke-width="1.7"/><path d="M12.4 10.4 L15 13" stroke="#2a2a2a" stroke-width="2"/></svg>
</div>
<div id="panel"><svg class="a" style="left:6px;top:12px" width="16" height="15" viewBox="0 0 16 15"><path d="M1 1.5 H14.2 L9 7.8 V13.5 L7 12.6 V7.8 Z" fill="none" stroke="#444" stroke-width="1.2" stroke-linejoin="round"/></svg><div class="a" style="left:32px;top:6px;width:132px;height:24.5px;border:1px solid #cdcdcd;border-radius:3px"></div><div class="t" style="left:37.60px;top:13.00px;font-size:12.2px;color:#8a8a8a;transform:scaleX(0.87);transform-origin:0 0;font-style:italic;">Filter by name or type</div><div class="t" style="left:3.50px;top:37.84px;font-size:10.7px;color:#333;transform:scaleX(0.985);transform-origin:0 0;font-weight:bold;">Features (21)</div><svg class="a" style="left:112px;top:37.5px" width="18" height="14" viewBox="0 0 18 14"><path d="M2.5 12.5 H15.5 V3.6 H8 L6.5 1.5 H1.5 V8" fill="none" stroke="#444" stroke-width="1.2"/><path d="M5 6.5 V13 M1.7 9.8 H8.3" stroke="#1e64c8" stroke-width="1.9"/></svg><svg class="a" style="left:137.5px;top:36px" width="16" height="16" viewBox="0 0 16 16"><circle cx="7.5" cy="9" r="5.8" fill="none" stroke="#2a2a2a" stroke-width="1.6"/><path d="M5.5 1.2 H9.5 M7.5 1.4 V3.2 M12.8 3 L14 4.2" stroke="#2a2a2a" stroke-width="1.5"/><path d="M7.5 9 L5.3 6.2" stroke="#2a2a2a" stroke-width="1.4"/></svg><div class="a" style="left:0;top:55.50px;width:152px;height:314.50px;overflow:hidden"><svg class="a" style="left:4.00px;top:-6.17px" width="15" height="15" viewBox="0 0 15 15"><path d="M0.8 2.8 L2.6 1 H12 Q13.6 1 13.6 2.6 V13.6 H2.6 L0.8 11.8 Z" fill="#fff" stroke="#5a5a5a" stroke-width="0.9"/><path d="M0.8 2.8 H12 L13.6 1.2 M2.6 2.8 V13.6" fill="none" stroke="#7a7a7a" stroke-width="0.7"/><rect x="5.2" y="5.6" width="8.2" height="7.9" fill="#9a9a9a" stroke="#4a4a4a" stroke-width="0.8"/><path d="M5.2 5.6 L6.4 6.8 H13.4 M6.4 6.8 V13.5" fill="none" stroke="#bdbdbd" stroke-width="0.6"/></svg><div class="t" style="left:20.75px;top:-5.84px;font-size:11.66px;color:#3a3a3a;transform:scaleX(0.944);transform-origin:0 0;">Extrude 2</div><svg class="a" style="left:4.00px;top:15.50px" width="15" height="15" viewBox="0 0 15 15"><path d="M0.8 2.8 L2.6 1 H12 Q13.6 1 13.6 2.6 V13.6 H2.6 L0.8 11.8 Z" fill="#fff" stroke="#5a5a5a" stroke-width="0.9"/><path d="M0.8 2.8 H12 L13.6 1.2 M2.6 2.8 V13.6" fill="none" stroke="#7a7a7a" stroke-width="0.7"/><rect x="5.2" y="5.6" width="8.2" height="7.9" fill="#9a9a9a" stroke="#4a4a4a" stroke-width="0.8"/><path d="M5.2 5.6 L6.4 6.8 H13.4 M6.4 6.8 V13.5" fill="none" stroke="#bdbdbd" stroke-width="0.6"/></svg><div class="t" style="left:20.75px;top:15.83px;font-size:11.66px;color:#3a3a3a;transform:scaleX(0.944);transform-origin:0 0;">Extrude 3</div><svg class="a" style="left:4.00px;top:36.67px" width="15" height="15" viewBox="0 0 15 15"><path d="M2.6 11 L11.3 1.8 Q12 1.2 12.7 1.8 L13.2 2.3 Q13.8 3 13.1 3.6 L4.5 12.8 L2.2 13.2 Z" fill="none" stroke="#b0b0b0" stroke-width="1"/><path d="M0.8 13.9 H14" stroke="#8ab4e6" stroke-width="1.1"/></svg><div class="t" style="left:20.75px;top:37.50px;font-size:11.66px;color:#a9a9a9;transform:scaleX(0.944);transform-origin:0 0;">Sketch 3</div><svg class="a" style="left:4.00px;top:58.84px" width="15" height="15" viewBox="0 0 15 15"><path d="M0.8 2.8 L2.6 1 H12 Q13.6 1 13.6 2.6 V13.6 H2.6 L0.8 11.8 Z" fill="#fff" stroke="#5a5a5a" stroke-width="0.9"/><path d="M0.8 2.8 H12 L13.6 1.2 M2.6 2.8 V13.6" fill="none" stroke="#7a7a7a" stroke-width="0.7"/><rect x="5.2" y="5.6" width="8.2" height="7.9" fill="#9a9a9a" stroke="#4a4a4a" stroke-width="0.8"/><path d="M5.2 5.6 L6.4 6.8 H13.4 M6.4 6.8 V13.5" fill="none" stroke="#bdbdbd" stroke-width="0.6"/></svg><div class="t" style="left:20.75px;top:59.17px;font-size:11.66px;color:#3a3a3a;transform:scaleX(0.944);transform-origin:0 0;">Extrude 4</div><svg class="a" style="left:4.00px;top:80.01px" width="15" height="15" viewBox="0 0 15 15"><path d="M2.6 11 L11.3 1.8 Q12 1.2 12.7 1.8 L13.2 2.3 Q13.8 3 13.1 3.6 L4.5 12.8 L2.2 13.2 Z" fill="none" stroke="#b0b0b0" stroke-width="1"/><path d="M0.8 13.9 H14" stroke="#8ab4e6" stroke-width="1.1"/></svg><div class="t" style="left:20.75px;top:80.84px;font-size:11.66px;color:#a9a9a9;transform:scaleX(0.944);transform-origin:0 0;">Sketch 4</div><svg class="a" style="left:4.00px;top:102.18px" width="15" height="15" viewBox="0 0 15 15"><path d="M0.8 2.8 L2.6 1 H12 Q13.6 1 13.6 2.6 V13.6 H2.6 L0.8 11.8 Z" fill="#fff" stroke="#5a5a5a" stroke-width="0.9"/><path d="M0.8 2.8 H12 L13.6 1.2 M2.6 2.8 V13.6" fill="none" stroke="#7a7a7a" stroke-width="0.7"/><rect x="5.2" y="5.6" width="8.2" height="7.9" fill="#9a9a9a" stroke="#4a4a4a" stroke-width="0.8"/><path d="M5.2 5.6 L6.4 6.8 H13.4 M6.4 6.8 V13.5" fill="none" stroke="#bdbdbd" stroke-width="0.6"/></svg><div class="t" style="left:20.75px;top:102.51px;font-size:11.66px;color:#3a3a3a;transform:scaleX(0.944);transform-origin:0 0;">Extrude 5</div><svg class="a" style="left:4.00px;top:123.35px" width="15" height="15" viewBox="0 0 15 15"><path d="M2.6 11 L11.3 1.8 Q12 1.2 12.7 1.8 L13.2 2.3 Q13.8 3 13.1 3.6 L4.5 12.8 L2.2 13.2 Z" fill="none" stroke="#b0b0b0" stroke-width="1"/><path d="M0.8 13.9 H14" stroke="#8ab4e6" stroke-width="1.1"/></svg><div class="t" style="left:20.75px;top:124.18px;font-size:11.66px;color:#a9a9a9;transform:scaleX(0.944);transform-origin:0 0;">Sketch 5</div><svg class="a" style="left:4.00px;top:145.52px" width="15" height="15" viewBox="0 0 15 15"><path d="M0.8 2.8 L2.6 1 H12 Q13.6 1 13.6 2.6 V13.6 H2.6 L0.8 11.8 Z" fill="#fff" stroke="#5a5a5a" stroke-width="0.9"/><path d="M0.8 2.8 H12 L13.6 1.2 M2.6 2.8 V13.6" fill="none" stroke="#7a7a7a" stroke-width="0.7"/><rect x="5.2" y="5.6" width="8.2" height="7.9" fill="#9a9a9a" stroke="#4a4a4a" stroke-width="0.8"/><path d="M5.2 5.6 L6.4 6.8 H13.4 M6.4 6.8 V13.5" fill="none" stroke="#bdbdbd" stroke-width="0.6"/></svg><div class="t" style="left:20.75px;top:145.85px;font-size:11.66px;color:#3a3a3a;transform:scaleX(0.944);transform-origin:0 0;">Extrude 6</div><svg class="a" style="left:4.00px;top:166.69px" width="15" height="15" viewBox="0 0 15 15"><path d="M2.6 11 L11.3 1.8 Q12 1.2 12.7 1.8 L13.2 2.3 Q13.8 3 13.1 3.6 L4.5 12.8 L2.2 13.2 Z" fill="none" stroke="#b0b0b0" stroke-width="1"/><path d="M0.8 13.9 H14" stroke="#8ab4e6" stroke-width="1.1"/></svg><div class="t" style="left:20.75px;top:167.52px;font-size:11.66px;color:#a9a9a9;transform:scaleX(0.944);transform-origin:0 0;">Sketch 6</div><svg class="a" style="left:4.00px;top:188.86px" width="15" height="15" viewBox="0 0 15 15"><path d="M0.8 2.8 L2.6 1 H12 Q13.6 1 13.6 2.6 V13.6 H2.6 L0.8 11.8 Z" fill="#fff" stroke="#5a5a5a" stroke-width="0.9"/><path d="M0.8 2.8 H12 L13.6 1.2 M2.6 2.8 V13.6" fill="none" stroke="#7a7a7a" stroke-width="0.7"/><rect x="5.2" y="5.6" width="8.2" height="7.9" fill="#9a9a9a" stroke="#4a4a4a" stroke-width="0.8"/><path d="M5.2 5.6 L6.4 6.8 H13.4 M6.4 6.8 V13.5" fill="none" stroke="#bdbdbd" stroke-width="0.6"/></svg><div class="t" style="left:20.75px;top:189.19px;font-size:11.66px;color:#3a3a3a;transform:scaleX(0.944);transform-origin:0 0;">Extrude 7</div><svg class="a" style="left:4.00px;top:210.03px" width="15" height="15" viewBox="0 0 15 15"><path d="M2.6 11 L11.3 1.8 Q12 1.2 12.7 1.8 L13.2 2.3 Q13.8 3 13.1 3.6 L4.5 12.8 L2.2 13.2 Z" fill="none" stroke="#b0b0b0" stroke-width="1"/><path d="M0.8 13.9 H14" stroke="#8ab4e6" stroke-width="1.1"/></svg><div class="t" style="left:20.75px;top:210.86px;font-size:11.66px;color:#a9a9a9;transform:scaleX(0.944);transform-origin:0 0;">Sketch 7</div><svg class="a" style="left:4.00px;top:232.20px" width="15" height="15" viewBox="0 0 15 15"><path d="M0.8 2.8 L2.6 1 H12 Q13.6 1 13.6 2.6 V13.6 H2.6 L0.8 11.8 Z" fill="#fff" stroke="#5a5a5a" stroke-width="0.9"/><path d="M0.8 2.8 H12 L13.6 1.2 M2.6 2.8 V13.6" fill="none" stroke="#7a7a7a" stroke-width="0.7"/><rect x="5.2" y="5.6" width="8.2" height="7.9" fill="#9a9a9a" stroke="#4a4a4a" stroke-width="0.8"/><path d="M5.2 5.6 L6.4 6.8 H13.4 M6.4 6.8 V13.5" fill="none" stroke="#bdbdbd" stroke-width="0.6"/></svg><div class="t" style="left:20.75px;top:232.53px;font-size:11.66px;color:#3a3a3a;transform:scaleX(0.944);transform-origin:0 0;">Extrude 8</div><svg class="a" style="left:4.00px;top:253.37px" width="15" height="15" viewBox="0 0 15 15"><path d="M2.6 11 L11.3 1.8 Q12 1.2 12.7 1.8 L13.2 2.3 Q13.8 3 13.1 3.6 L4.5 12.8 L2.2 13.2 Z" fill="none" stroke="#b0b0b0" stroke-width="1"/><path d="M0.8 13.9 H14" stroke="#8ab4e6" stroke-width="1.1"/></svg><div class="t" style="left:20.75px;top:254.20px;font-size:11.66px;color:#a9a9a9;transform:scaleX(0.944);transform-origin:0 0;">Sketch 8</div><svg class="a" style="left:4.00px;top:275.54px" width="15" height="15" viewBox="0 0 15 15"><path d="M0.8 2.8 L2.6 1 H12 Q13.6 1 13.6 2.6 V13.6 H2.6 L0.8 11.8 Z" fill="#fff" stroke="#5a5a5a" stroke-width="0.9"/><path d="M0.8 2.8 H12 L13.6 1.2 M2.6 2.8 V13.6" fill="none" stroke="#7a7a7a" stroke-width="0.7"/><rect x="5.2" y="5.6" width="8.2" height="7.9" fill="#9a9a9a" stroke="#4a4a4a" stroke-width="0.8"/><path d="M5.2 5.6 L6.4 6.8 H13.4 M6.4 6.8 V13.5" fill="none" stroke="#bdbdbd" stroke-width="0.6"/></svg><div class="t" style="left:20.75px;top:275.87px;font-size:11.66px;color:#3a3a3a;transform:scaleX(0.944);transform-origin:0 0;">Extrude 9</div></div><div class="a" style="left:152.5px;top:56px;width:14px;height:314px;background:#f1f1f1"></div><svg class="a" style="left:155.5px;top:61.5px" width="8" height="5" viewBox="0 0 8 5"><path d="M0.5 4.5 L4 0.8 L7.5 4.5Z" fill="#333"/></svg><div class="a" style="left:154px;top:175px;width:11.5px;height:180.5px;background:#c1c1c1"></div><svg class="a" style="left:155.5px;top:360.5px" width="8" height="5" viewBox="0 0 8 5"><path d="M0.5 0.5 L4 4.2 L7.5 0.5Z" fill="#333"/></svg><div class="a" style="left:4px;top:357px;width:144.5px;height:5px;background:#ababab"></div><div class="a" style="left:0px;top:370px;width:166px;height:1px;background:#e3e3e3"></div><svg class="a" style="left:3px;top:380px" width="11" height="7" viewBox="0 0 11 7"><path d="M1 1 L5.5 5.5 L10 1" fill="none" stroke="#444" stroke-width="1.5"/></svg><div class="t" style="left:18.60px;top:376.74px;font-size:10.7px;color:#3a3a3a;transform:scaleX(0.963);transform-origin:0 0;">Parts (1)</div><svg class="a" style="left:20px;top:397px" width="15" height="15" viewBox="0 0 15 15"><path d="M1 8.5 L4.5 6.3 V2 Q5.5 1 7 1 L12 1.2 Q13.5 1.5 13.5 3 V13.5 L5 14 Q1 14 1 11 Z" fill="none" stroke="#555" stroke-width="1"/><path d="M1 8.5 L4.5 11 H13.5 M4.5 11 V14 M4.5 6.3 V8.5 L8.5 8.6 V1.5" fill="none" stroke="#555" stroke-width="0.9"/></svg><div class="t" style="left:36.60px;top:396.69px;font-size:11px;color:#3a3a3a;transform:scaleX(0.97);transform-origin:0 0;">Part 1</div></div><div class="a" style="left:204px;top:317.5px;width:28px;height:28.5px;background:#fff;border:1px solid #d6d6d6;border-left:none"></div><svg class="a" style="left:209px;top:325px" width="17" height="17" viewBox="0 0 17 17"><path d="M1 1.5 L3 3.5 L5 1.5" fill="none" stroke="#444" stroke-width="1.1"/><path d="M3 3.5 V15.5 M6.5 4 H16 M6.5 8 H16 M6.5 12 H16 M3 15.5 H16" stroke="#444" stroke-width="1.2"/></svg><div id="tabbar">
  <svg class="a" style="left:7px;top:7px" width="14" height="14" viewBox="0 0 14 14"><path d="M7 0.5 V13.5 M0.5 7 H13.5" stroke="#444" stroke-width="2"/></svg>
  <div class="a" style="left:33px;top:0.5px;width:165px;height:23.5px;background:#fff"></div>
  <div class="a" style="left:33px;top:22px;width:164.5px;height:2px;background:#1f5bbd"></div>
  <svg class="a" style="left:42px;top:4px" width="15" height="16" viewBox="0 0 15 16"><path d="M1 5 Q1 3.6 2.5 3.6 H5.5 V15 H2.5 Q1 15 1 13.6 Z M5.5 2.5 Q5.5 1 7 1 H12 Q13.8 1 13.8 2.8 V14.8 H5.5" fill="none" stroke="#444" stroke-width="1"/><path d="M3 3.6 V15 M7.5 1 V15 M5.5 2.2 L7.5 1" fill="none" stroke="#444" stroke-width="0.9"/></svg>
  <div class="t" style="left:59.1px;top:7px;font-size:12.3px;color:#333;transform:scaleX(0.914);transform-origin:0 0">Part Studio 1</div>
  <div class="a" style="left:200px;top:0.5px;width:167px;height:23px;background:#e8e8e8;border-radius:0 0 4px 4px;border:1px solid #dadada;border-top:none"></div>
  <svg class="a" style="left:210px;top:4px" width="16" height="16" viewBox="0 0 16 16"><path d="M1 3.5 L3.5 1 H12.5 L15 3.5 V15 H3.5 L1 12.5 Z" fill="#fff" stroke="#333" stroke-width="1"/><path d="M1 3.5 H12.5 L15 1 M12.5 3.5 V15" fill="none" stroke="#333" stroke-width="1"/><rect x="2.5" y="2" width="9" height="9" fill="#8a8a8a"/><path d="M1 3.5 L3.5 1 H12.5 V12.5 L15 15" fill="none" stroke="#333" stroke-width="0.8"/></svg>
  <div class="t" style="left:228.4px;top:7px;font-size:12.3px;color:#444;transform:scaleX(0.936);transform-origin:0 0">Assembly 1</div>
</div>
<div id="bottomline"></div>

</body></html>
